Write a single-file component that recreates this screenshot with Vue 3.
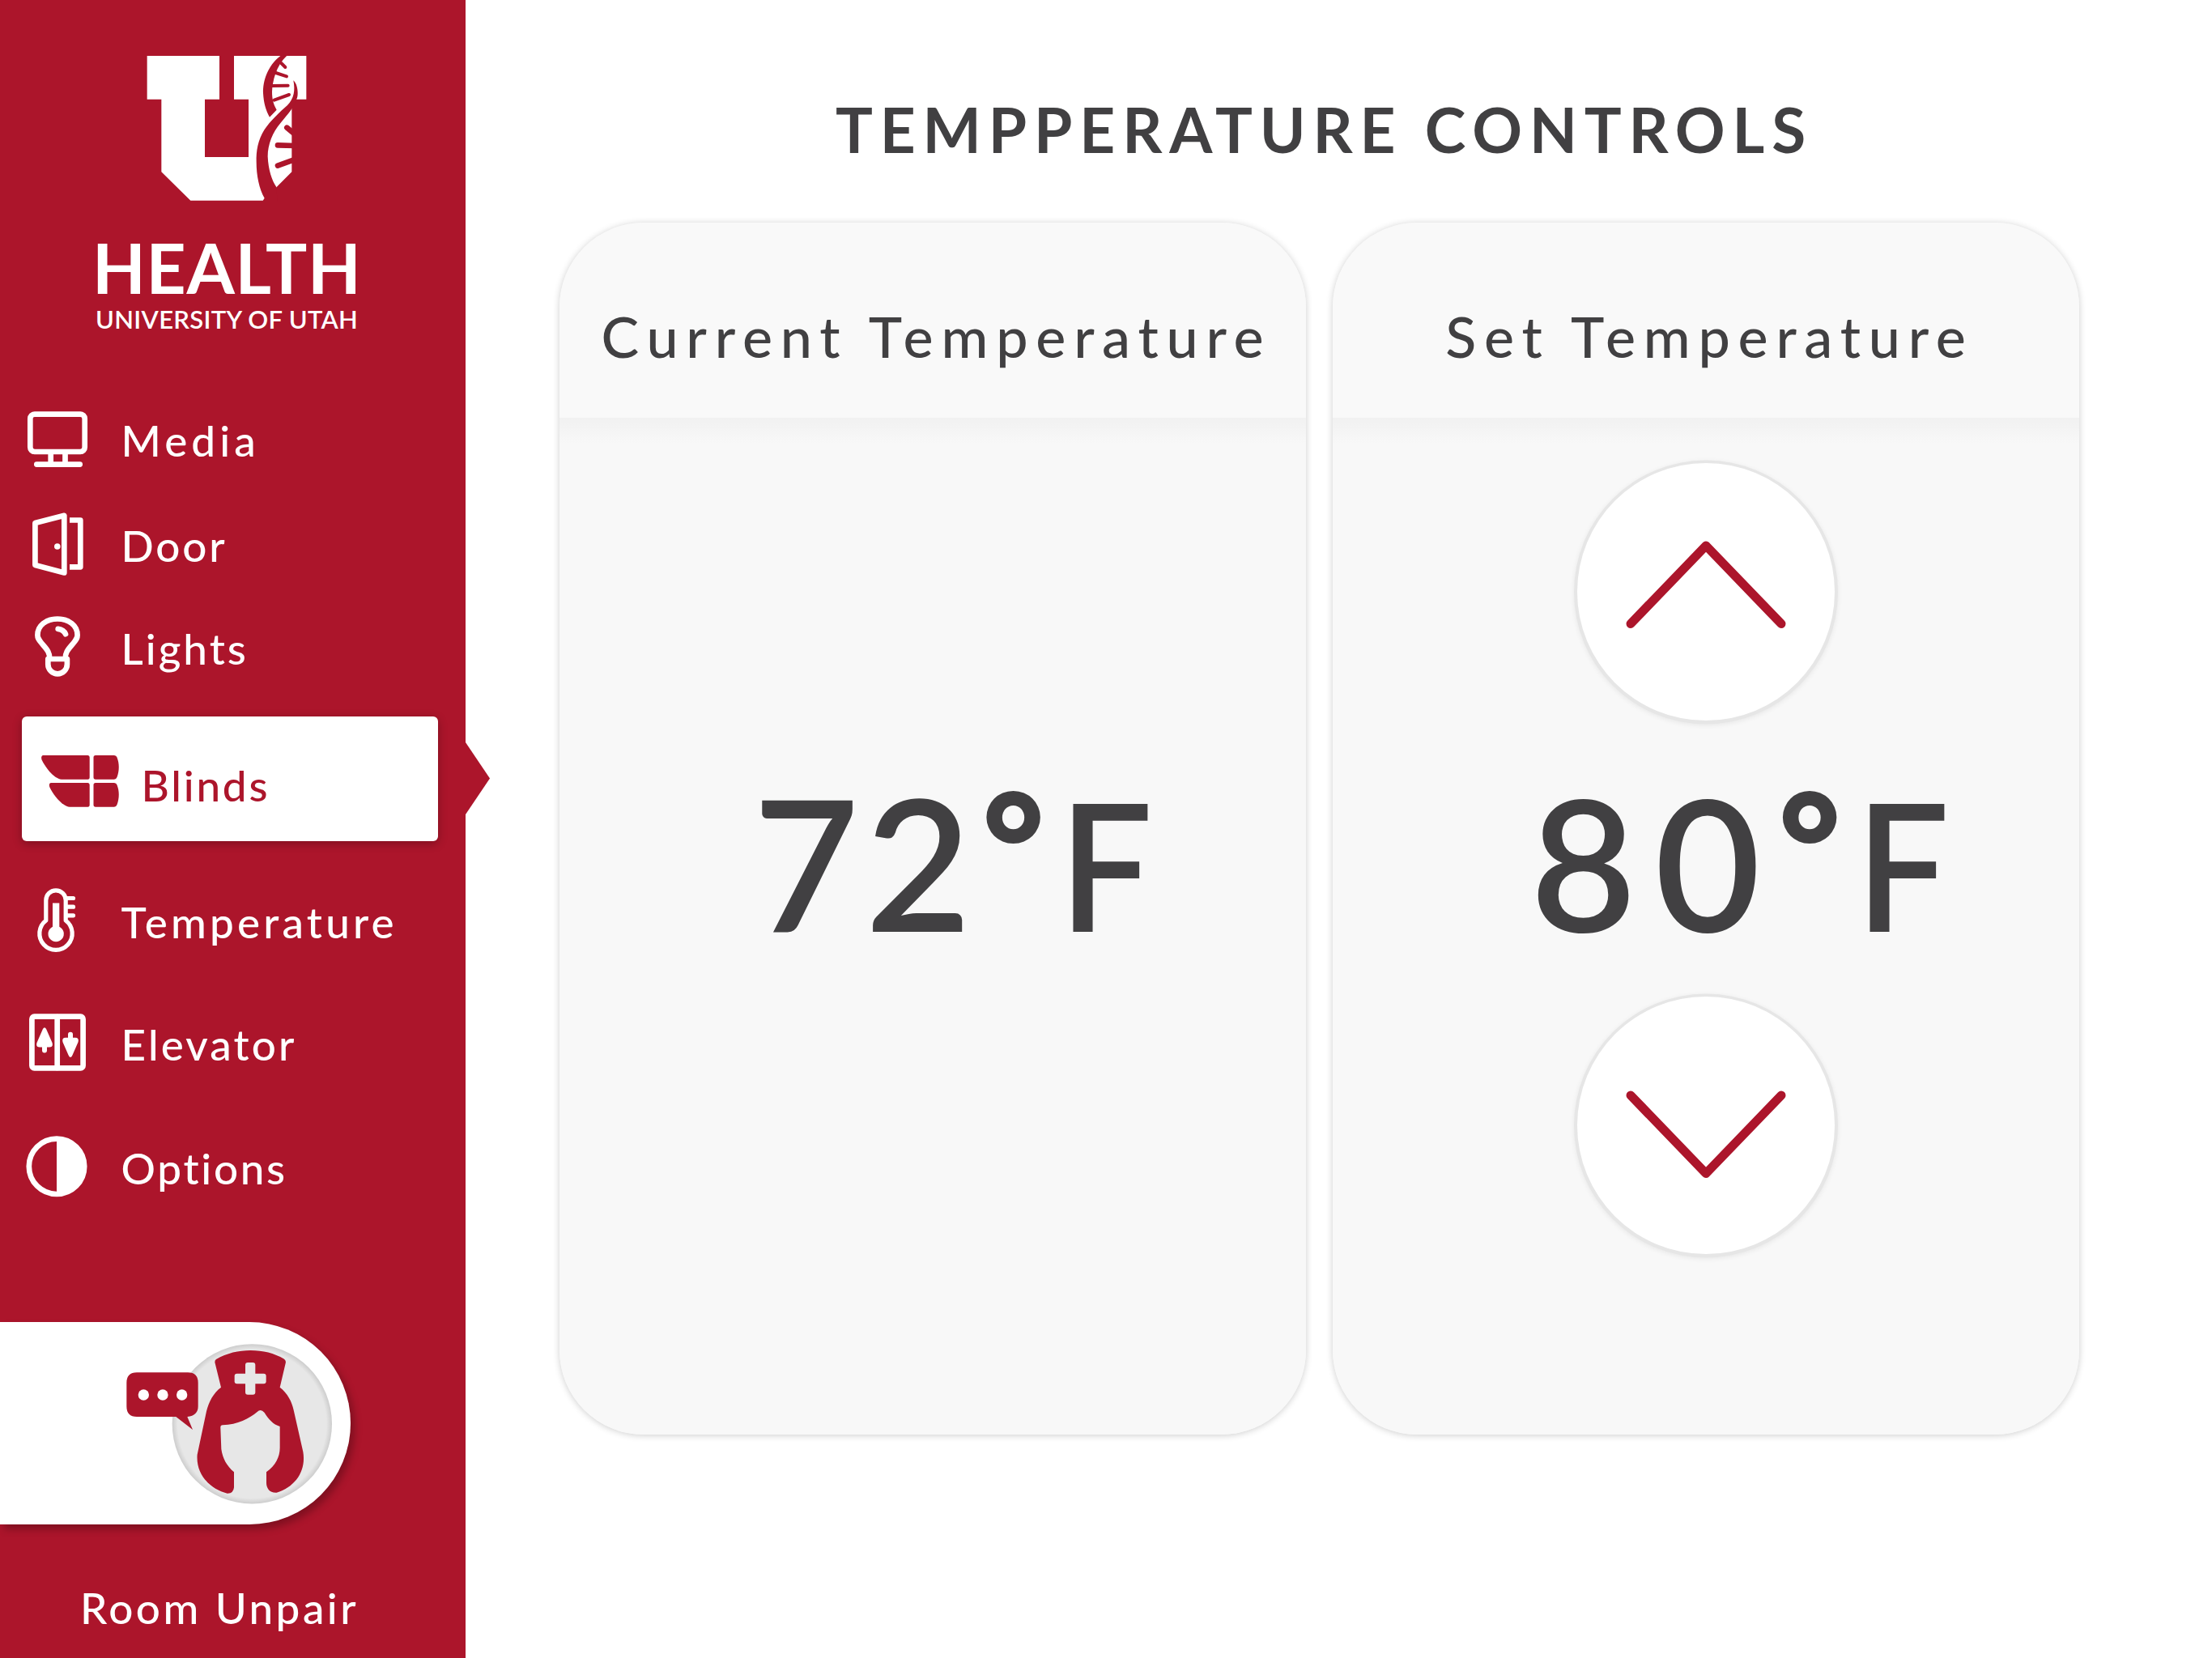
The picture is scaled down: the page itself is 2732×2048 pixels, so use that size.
<script setup>
import { ref } from 'vue'

const active = ref('blinds')
const current = ref(72)
const target = ref(80)

const items = [
  { id: 'media', label: 'Media', spacing: 5.1 },
  { id: 'door', label: 'Door', spacing: 2.8 },
  { id: 'lights', label: 'Lights', spacing: 3 },
  { id: 'blinds', label: 'Blinds', spacing: 2.8 },
  { id: 'temperature', label: 'Temperature', spacing: 4.2 },
  { id: 'elevator', label: 'Elevator', spacing: 3.1 },
  { id: 'options', label: 'Options', spacing: 2.7 },
]
const digits = (n) => String(n).split('')
</script>

<template>
  <div class="screen">
    <aside class="sidebar">
      <div class="brand">
        <svg class="logo" viewBox="0 0 1080 600">
          <path class="white" d="M245 57H513V218H459V432H621V218H567V57H835V218H781V487L675 593H406L298 487V218H245Z" />
          <path class="red" d="M740 56C690 95 674 150 675 195C677 230 685 260 699 284L725 257C712 235 708 215 708 190C710 150 722 95 763 56Z" />
          <path class="red" d="M787 148C799 158 803 180 803 195C803 210 800 215 797 224C790 245 765 275 740 305C710 340 692 385 692 430C694 480 708 520 724 543L728 600H675L674 594L680 584C660 550 650 500 650 450C649 410 655 370 680 330C700 300 740 262 765 240C790 215 794 185 787 148Z" />
          <path class="rung" d="M742 84L757 99M722 120L762 133M708 168L767 167M716 221L771 201" />
          <path class="rung thick" d="M763 323L792 347M729 388L795 390M729 464L795 440" />
        </svg>
        <div class="brand-name">HEALTH</div>
        <div class="brand-sub">UNIVERSITY OF UTAH</div>
      </div>

      <nav class="menu">
        <button
          v-for="item in items"
          :key="item.id"
          class="item"
          :class="[item.id, { active: item.id === active }]"
          @click="active = item.id"
        >
          <svg v-if="item.id === 'media'" class="icon" viewBox="20 493 100 100">
            <rect x="37.3" y="511.6" width="67.4" height="46.4" rx="5.5" />
            <path d="M62.7 559V573M80.5 559V573M45.3 573.6H98.7" />
          </svg>
          <svg v-else-if="item.id === 'door'" class="icon" viewBox="20 623 100 100">
            <path d="M43.4 646L79.3 636.8V707.4L43.4 698Z" />
            <path class="butt" d="M86 642.5H99.3V700.3H86" />
            <circle class="solid" cx="70.8" cy="675" r="3.8" />
          </svg>
          <svg v-else-if="item.id === 'lights'" class="icon" viewBox="20 749.5 100 100">
            <path d="M61.3 813C61.3 804 57 801 51 793.5C47.5 789 46.4 787.5 46.4 784C46.4 772 57 764 71 764S95.6 772 95.6 784C95.6 787.5 94.5 789 91 793.5C85 801 80.7 804 80.7 813" />
            <path d="M59.3 813.5V820A11.8 11.8 0 0 0 82.9 820V813.5Z" />
            <path d="M71.7 776.3C76 776.8 79.5 779 81 782.7" />
          </svg>
          <svg v-else-if="item.id === 'blinds'" class="icon solid" viewBox="45 915 110 100">
            <path d="M54 933H108.5Q110.7 933 110.7 935.5V960Q110.7 962.7 108.5 962.7H76C66 962 55 946 51.6 938.5C50.4 935 51.5 933 54 933Z" />
            <path d="M118 933H141Q143.8 933 144.5 935.5C147.5 943 147.5 952 144.5 960Q143.5 962.7 141 962.7H118Q115.5 962.7 115.5 960V935.5Q115.5 933 118 933Z" />
            <path d="M63.5 967H108.5Q110.7 967 110.7 969.5V994Q110.7 996.7 108.5 996.7H86C76 996 64.5 979.5 61.2 972C60.2 969 61 967 63.5 967Z" />
            <path d="M118 967H141Q143.8 967 144.5 969.5C147.5 977 147.5 986 144.5 994Q143.5 996.7 141 996.7H118Q115.5 996.7 115.5 994V969.5Q115.5 967 118 967Z" />
          </svg>
          <svg v-else-if="item.id === 'temperature'" class="icon fine" viewBox="20 1087.5 100 100">
            <path d="M56.8 1136.5V1111.5A12.2 12.2 0 0 1 81.2 1111.5V1136.5A20.2 20.2 0 1 1 56.8 1136.5Z" />
            <path d="M82 1109H90.5M82 1119.7H90.5M82 1130.3H90.5" />
            <path class="solid" d="M65 1115H73.3V1144.3A9.7 9.7 0 1 1 65 1144.3Z" />
          </svg>
          <svg v-else-if="item.id === 'elevator'" class="icon" viewBox="20 1239 100 100">
            <rect x="39.4" y="1255.7" width="63.2" height="63.6" rx="3" />
            <path d="M70.7 1256V1319" />
            <path class="solid" d="M55 1269.3Q56.5 1269.5 57.5 1272L64.5 1288Q66 1293.6 61 1293.6H58V1297.5A3 3 0 0 1 52 1297.5V1293.6H49Q44 1293.6 45.5 1288L52.5 1272Q53.5 1269.5 55 1269.3Z" />
            <path class="solid" transform="translate(142 2575.3) scale(-1 -1)" d="M55 1269.3Q56.5 1269.5 57.5 1272L64.5 1288Q66 1293.6 61 1293.6H58V1297.5A3 3 0 0 1 52 1297.5V1293.6H49Q44 1293.6 45.5 1288L52.5 1272Q53.5 1269.5 55 1269.3Z" />
          </svg>
          <svg v-else class="icon" viewBox="20 1392 100 100">
            <circle cx="70" cy="1440.8" r="34.2" />
            <path class="solid" d="M70 1405A35.8 35.8 0 0 1 70 1476.6Z" />
          </svg>
          <span class="label" :style="{ letterSpacing: item.spacing + 'px' }">{{ item.label }}</span>
        </button>
      </nav>

      <button class="nurse">
        <svg viewBox="0 99 1299 750">
          <defs>
            <radialGradient id="disc">
              <stop offset=".93" stop-color="#e7e7e7" />
              <stop offset="1" stop-color="#cdcdcd" />
            </radialGradient>
          </defs>
          <circle cx="934" cy="476.5" r="296" fill="url(#disc)" />
          <path class="red" d="M801 237C840 214 885 204 928 204C975 204 1015 214 1053 236Q1061 242 1058 252L1037 341C1065 362 1082 395 1088 425L1123 580C1135 650 1095 710 1025 731C1000 733 987 715 987 695V655C1020 632 1037 600 1037 565V486C1012 478 995 460 980 435Q966 418 953 432C925 455 880 480 825 481Q816 481 817 492L820 570C825 605 840 632 867 655V712Q865 735 842 734C780 718 725 665 731 590L765 430C774 395 790 362 819 341L797 252Q794 242 801 237Z" />
          <rect class="cross" x="909" y="249" width="37" height="119" rx="9" />
          <rect class="cross" x="869" y="290" width="117" height="38" rx="9" />
          <path class="red" d="M507 286H696Q734 286 734 324V412Q734 446 694 450L714 498L652 450H507Q469 450 469 412V324Q469 286 507 286Z" />
          <circle class="white" cx="532" cy="369" r="20" />
          <circle class="white" cx="603" cy="369" r="20" />
          <circle class="white" cx="674" cy="369" r="20" />
        </svg>
      </button>
      <div class="unpair">Room Unpair</div>
      <svg class="pointer" viewBox="0 0 30 90"><path class="red" d="M0 0L30 44.5L0 89Z" /></svg>
    </aside>

    <main class="content">
      <h1>TEMPPERATURE CONTROLS</h1>
      <div class="cards">
        <section class="card now">
          <h2>Current Temperature</h2>
          <div class="body">
            <div class="value"><span v-for="(d, i) in digits(current)" :key="i" class="digit">{{ d }}</span><span class="deg">°</span><span class="unit">F</span></div>
          </div>
        </section>
        <section class="card set">
          <h2>Set Temperature</h2>
          <div class="body">
            <button class="round" @click="target++">
              <svg viewBox="0 0 318 318"><path d="M66 198.5L159 102L252 198.5" /></svg>
            </button>
            <div class="value"><span v-for="(d, i) in digits(target)" :key="i" class="digit">{{ d }}</span><span class="deg">°</span><span class="unit">F</span></div>
            <button class="round" @click="target--">
              <svg viewBox="0 0 318 318"><path d="M66 122L159 218.5L252 122" /></svg>
            </button>
          </div>
        </section>
      </div>
    </main>
  </div>
</template>

<style>
body {
  margin: 0;
  background: #fff;
}
</style>

<style scoped>
.screen {
  display: flex;
  width: 2732px;
  height: 2048px;
  overflow: hidden;
  background: #fff;
  color: #414042;
  font-family: Lato, "Open Sans", sans-serif;
}
button {
  border: 0;
  padding: 0;
  background: none;
  color: inherit;
  font: inherit;
  text-align: left;
}
svg {
  display: block;
}
.white { fill: #fff; }
.red { fill: #ac152b; }

.sidebar {
  position: relative;
  box-sizing: border-box;
  display: flex;
  flex-direction: column;
  flex: none;
  width: 575px;
  height: 2048px;
  padding-top: 50px;
  background: #ac152b;
  color: #fff;
}
.pointer {
  position: absolute;
  left: 575px;
  top: 917px;
  width: 30px;
  height: 90px;
}
.brand {
  height: 443px;
}
.logo {
  width: 360px;
  height: 200px;
  margin-left: 100px;
}
.rung {
  fill: none;
  stroke: #ac152b;
  stroke-width: 12;
  stroke-linecap: round;
}
.rung.thick { stroke-width: 20; }
.brand-name {
  margin: 35px 0 0 114px;
  font-size: 85.5px;
  font-weight: 700;
  line-height: 90px;
  letter-spacing: 0.7px;
}
.brand-sub {
  margin: 1px 0 0 118px;
  font-size: 31px;
  font-weight: 600;
  line-height: 36px;
  letter-spacing: 0.3px;
  white-space: nowrap;
}

.menu {
  display: flex;
  flex-direction: column;
  height: 1140px;
}
.item {
  display: flex;
  align-items: center;
  flex: none;
  height: 100px;
  padding-left: 20px;
}
.door { margin-top: 30px; }
.lights { margin-top: 26.5px; }
.blinds { margin-top: 35.5px; }
.temperature { margin-top: 48.5px; }
.elevator { margin-top: 51.5px; }
.options { margin-top: 53px; }
.icon {
  flex: none;
  width: 100px;
  height: 100px;
  fill: none;
  stroke: currentColor;
  stroke-width: 6.7;
  stroke-linecap: round;
  stroke-linejoin: round;
}
.icon.fine { stroke-width: 5.2; }
.icon.solid,
.icon .solid {
  fill: currentColor;
  stroke: none;
}
.icon .butt { stroke-linecap: butt; }
.label {
  margin-left: 29.5px;
  padding-top: 2px;
  font-size: 53px;
  font-weight: 500;
  line-height: 64px;
  white-space: nowrap;
}
.item.active {
  width: 514px;
  height: 154px;
  margin-left: 27px;
  padding-left: 18px;
  border-radius: 6px;
  background: #fff;
  color: #ac152b;
  box-shadow: 0 3px 12px rgba(0, 0, 0, 0.28);
}
.active .icon {
  width: 110px;
  margin-top: 6px;
}
.active .label {
  margin-left: 19.5px;
  padding-top: 15px;
}

.nurse {
  flex: none;
  width: 433px;
  height: 250px;
  border-radius: 0 125px 125px 0;
  background: #fff;
  box-shadow: 5px 6px 10px rgba(0, 0, 0, 0.26);
}
.nurse svg {
  width: 433px;
  height: 250px;
}
.cross { fill: #e7e7e7; }
.unpair {
  margin: 71px 0 0 99px;
  font-size: 53px;
  font-weight: 500;
  line-height: 64px;
  letter-spacing: 3.5px;
  white-space: nowrap;
}

.content {
  width: 1877px;
  margin-left: 116px;
  padding-top: 119px;
}
h1 {
  margin: 0;
  padding-left: 12px;
  font-size: 76.5px;
  font-weight: 700;
  line-height: 80px;
  letter-spacing: 8.9px;
  text-align: center;
}
.cards {
  display: flex;
  justify-content: space-between;
  margin-top: 76px;
}
.card {
  width: 922px;
  height: 1497px;
  border-radius: 104px;
  overflow: hidden;
  background: #f8f8f8;
  box-shadow: 0 1px 9px rgba(0, 0, 0, 0.2);
}
h2 {
  box-sizing: border-box;
  height: 241px;
  margin: 0;
  padding: 100px 0 0 9px;
  background: #f9f9f9;
  font-size: 70px;
  font-weight: 500;
  line-height: 80px;
  letter-spacing: 9.8px;
  text-align: center;
}
.body {
  box-sizing: border-box;
  display: flex;
  flex-direction: column;
  align-items: flex-start;
  height: 1256px;
  padding-top: 56px;
  background: linear-gradient(#f1f1f1, #f8f8f8 32px);
}
.round {
  flex: none;
  width: 318px;
  height: 318px;
  margin-left: 302px;
  border-radius: 50%;
  background: #fff;
  box-shadow: 0 0.5px 0 4px #e6e6e6, 0 2px 6px 4px rgba(0, 0, 0, 0.07);
}
.round path {
  fill: none;
  stroke: #ac152b;
  stroke-width: 11;
  stroke-linecap: round;
  stroke-linejoin: round;
}
.value {
  height: 220px;
  font-size: 226px;
  font-weight: 600;
  line-height: 220px;
  white-space: nowrap;
}
.now .value { margin: 382px 0 0 239px; }
.set .value { margin: 64px 0 57px 244px; }
.now .digit { margin-right: 7.5px; }
.now .digit + .digit { margin-right: 14px; }
.set .digit { margin-right: 22.5px; }
.deg {
  font-size: 182px;
  font-weight: 800;
  line-height: 0;
  vertical-align: 39px;
}
.unit {
  display: inline-block;
  margin-left: 19px;
  font-size: 220px;
  line-height: 0;
  transform: scaleX(0.93);
  transform-origin: left;
}
</style>
